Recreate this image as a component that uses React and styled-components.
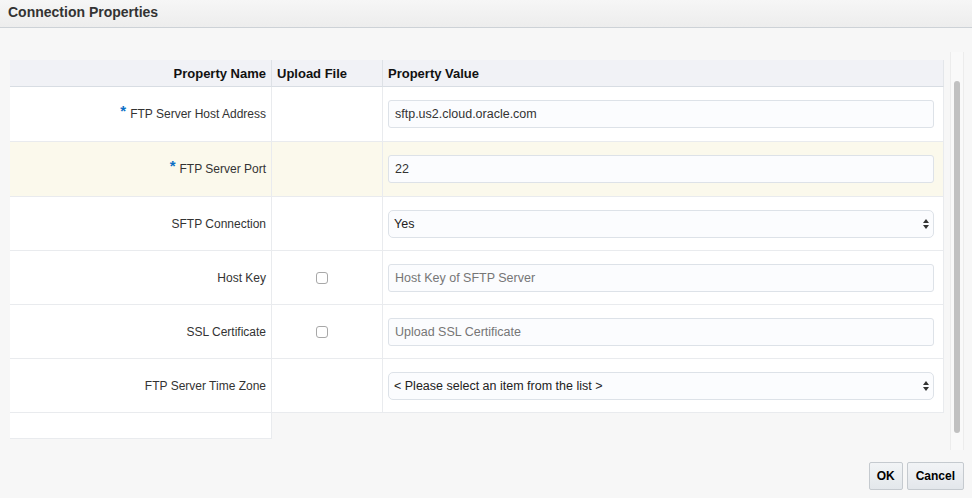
import React from "react";
import styled, { createGlobalStyle } from "styled-components";

const GlobalStyle = createGlobalStyle`
  html, body {
    margin: 0;
    padding: 0;
    background: #f7f7f7;
  }
  body {
    font-family: "Liberation Sans", Arial, Helvetica, sans-serif;
    font-size: 12px;
    color: #333;
  }
`;

const Dialog = styled.div`
  width: 972px;
  height: 498px;
  display: flex;
  flex-direction: column;
  background: #f7f7f7;
  overflow: hidden;
`;

const TitleBar = styled.div`
  height: 27px;
  line-height: 25px;
  padding-left: 8px;
  border-bottom: 1px solid #cdd2d7;
  background: linear-gradient(#f6f6f6, #ededed);
  font-size: 14px;
  font-weight: bold;
  color: #333;
`;

const Body = styled.div`
  display: flex;
  height: 398px;
  padding: 24px 8px 0 10px;
`;

const TableArea = styled.div`
  width: 934px;
  padding-top: 8px;
`;

const Grid = styled.div`
  display: grid;
  grid-template-columns: 262px 111px 561px;
`;

const HeadCell = styled.div`
  height: 26px;
  display: flex;
  align-items: center;
  justify-content: ${(p) => (p.$right ? "flex-end" : "flex-start")};
  padding: ${(p) => (p.$right ? "0 5px 0 0" : "0 0 0 5px")};
  background: #f1f2f6;
  border-bottom: 1px solid #d8dde3;
  border-right: 1px solid ${(p) => (p.$last ? "#e3e6ea" : "#dde1e6")};
  font-weight: bold;
  color: #111;
  font-size: 13px;
`;

const Cell = styled.div`
  height: ${(p) => p.$h || 53}px;
  display: flex;
  align-items: center;
  justify-content: ${(p) => p.$justify || "flex-start"};
  padding: ${(p) => p.$pad || "0"};
  background: ${(p) => (p.$hl ? "#fbf9ec" : "#fff")};
  border-bottom: 1px solid #e9ebee;
  border-right: 1px solid #e9ebee;
  color: #333;
`;

const Required = styled.span`
  color: #0b6fc6;
  font-weight: bold;
  font-size: 15px;
  margin-right: 4px;
  position: relative;
  top: -4px;
`;

const Filler = styled.div`
  width: 261px;
  height: 25px;
  background: #fff;
  border-right: 1px solid #e9ebee;
  border-bottom: 1px solid #e9ebee;
`;

const TextInput = styled.input`
  box-sizing: border-box;
  width: 546px;
  height: 28px;
  padding: 0 6px;
  border: 1px solid #dde2e8;
  border-radius: 3px;
  background: #fbfcfe;
  font-family: inherit;
  font-size: 12.5px;
  color: #333;
  outline: none;
  &::placeholder {
    color: #767676;
  }
`;

const SelectWrap = styled.div`
  position: relative;
  width: 546px;
  height: 28px;
`;

const Select = styled.select`
  box-sizing: border-box;
  width: 100%;
  height: 100%;
  padding: 0 20px 0 5px;
  appearance: none;
  -webkit-appearance: none;
  border: 1px solid #dde2e8;
  border-radius: 5px;
  background: #fbfcfe;
  font-family: inherit;
  font-size: 12.5px;
  color: #222;
  outline: none;
`;

const Arrows = styled.svg`
  position: absolute;
  right: 5px;
  top: 9px;
  pointer-events: none;
`;

const Check = styled.span`
  box-sizing: border-box;
  display: inline-block;
  width: 12px;
  height: 12px;
  border: 1px solid #a8a8a8;
  border-radius: 3px;
  background: #fff;
`;

const ScrollTrack = styled.div`
  box-sizing: border-box;
  margin-left: 6px;
  width: 15px;
  height: 398px;
  border-left: 1px solid #ececec;
  border-right: 1px solid #ececec;
  background: #f9f9f9;
  padding: 29px 3px 0 3px;
`;

const ScrollThumb = styled.div`
  height: 352px;
  border-radius: 4px;
  background: #c1c1c1;
`;

const Footer = styled.div`
  display: flex;
  justify-content: flex-end;
  gap: 4px;
  padding: 12px 8px 0 0;
`;

const Button = styled.button`
  height: 28px;
  padding: 0 ${(p) => p.$pad || 8}px;
  border: 1px solid #c5cacf;
  border-radius: 2px;
  background: linear-gradient(#f2f4f6, #e3e7eb);
  font-family: inherit;
  font-size: 12px;
  font-weight: bold;
  color: #000;
`;

const SelectArrows = () => (
  <Arrows width="6" height="10" viewBox="0 0 6 10">
    <path d="M3 0 L6 4 L0 4 Z" fill="#333" />
    <path d="M0 6 L6 6 L3 10 Z" fill="#333" />
  </Arrows>
);

const rows = [
  { name: "FTP Server Host Address", required: true, kind: "input", value: "sftp.us2.cloud.oracle.com", h: 54 },
  { name: "FTP Server Port", required: true, kind: "input", value: "22", hl: true, h: 54 },
  { name: "SFTP Connection", kind: "select", value: "Yes" },
  { name: "Host Key", kind: "input", placeholder: "Host Key of SFTP Server", upload: true },
  { name: "SSL Certificate", kind: "input", placeholder: "Upload SSL Certificate", upload: true },
  { name: "FTP Server Time Zone", kind: "select", value: "< Please select an item from the list >" },
];

export default function App() {
  return (
    <>
      <GlobalStyle />
      <Dialog>
        <TitleBar>Connection Properties</TitleBar>
        <Body>
          <TableArea>
            <Grid>
              <HeadCell $right>Property Name</HeadCell>
              <HeadCell>Upload File</HeadCell>
              <HeadCell $last>Property Value</HeadCell>
              {rows.map((r) => (
                <React.Fragment key={r.name}>
                  <Cell $h={r.h} $hl={r.hl} $justify="flex-end" $pad="0 5px 0 0">
                    {r.required && <Required>*</Required>}
                    {r.name}
                  </Cell>
                  <Cell $h={r.h} $hl={r.hl} $justify="center" $pad="0 10px 0 0">
                    {r.upload && <Check />}
                  </Cell>
                  <Cell $h={r.h} $hl={r.hl} $pad="0 0 0 5px">
                    {r.kind === "input" ? (
                      <TextInput
                        defaultValue={r.value}
                        placeholder={r.placeholder}
                      />
                    ) : (
                      <SelectWrap>
                        <Select defaultValue={r.value}>
                          <option>{r.value}</option>
                        </Select>
                        <SelectArrows />
                      </SelectWrap>
                    )}
                  </Cell>
                </React.Fragment>
              ))}
            </Grid>
            <Filler />
          </TableArea>
          <ScrollTrack>
            <ScrollThumb />
          </ScrollTrack>
        </Body>
        <Footer>
          <Button $pad={7}>OK</Button>
          <Button $pad={8}>Cancel</Button>
        </Footer>
      </Dialog>
    </>
  );
}
